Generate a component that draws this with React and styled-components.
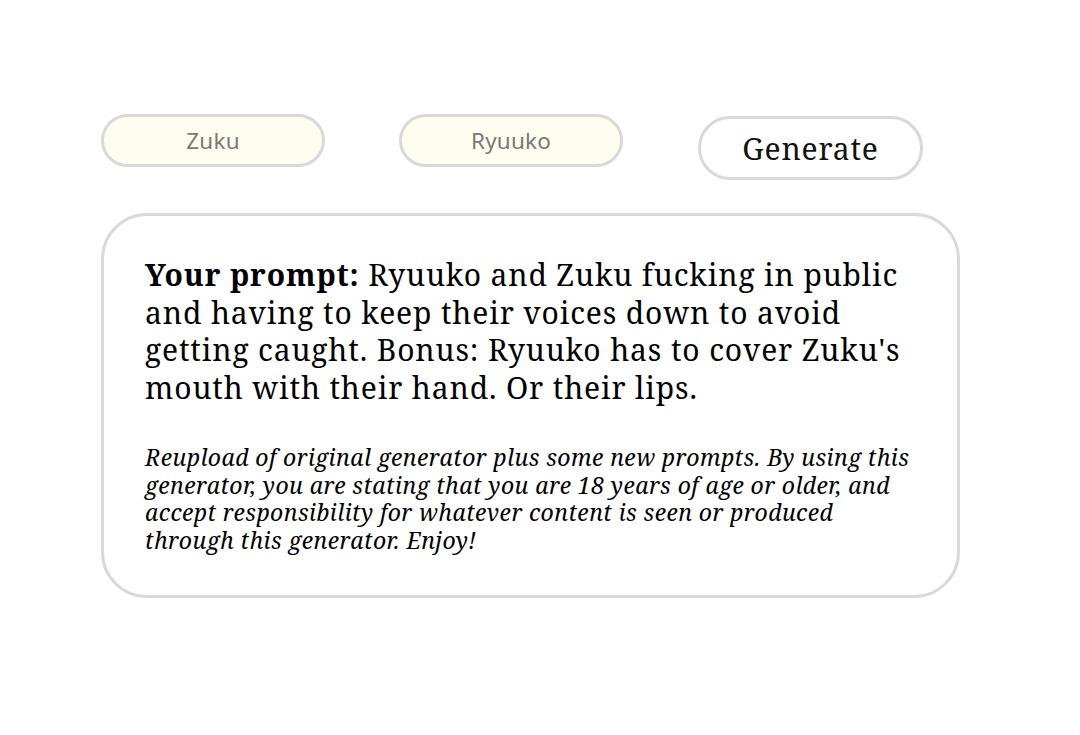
import React from "react";
import styled, { createGlobalStyle } from "styled-components";

const Global = createGlobalStyle`
  html, body { margin: 0; padding: 0; background: #fff; }
  body { font-family: "Noto Serif", serif; }
`;

const Page = styled.div`
  width: 1080px;
  height: 735px;
  box-sizing: border-box;
  padding: 114px 0 0 101px;
`;

const Controls = styled.div`
  display: flex;
  align-items: flex-start;
  gap: 74px;
  width: 822px;
`;

const NameInput = styled.input`
  box-sizing: border-box;
  width: 224px;
  height: 53px;
  border: 3px solid #d9d9d9;
  border-radius: 27px;
  background: #fefef0;
  text-align: center;
  font-family: "Noto Sans", sans-serif;
  font-size: 22.5px;
  letter-spacing: 0.2px;
  color: #7a7a72;
  outline: none;
  padding: 0 10px;
`;

const GenerateButton = styled.button`
  box-sizing: border-box;
  width: 225px;
  height: 64px;
  margin-top: 2px;
  margin-left: 1px;
  border: 3px solid #d9d9d9;
  border-radius: 32px;
  background: #fff;
  font-family: "Noto Serif", serif;
  font-size: 30px;
  letter-spacing: 0.8px;
  color: #111;
  cursor: pointer;
`;

const Card = styled.div`
  box-sizing: border-box;
  width: 859px;
  height: 385px;
  margin-top: 33px;
  border: 3px solid #d9d9d9;
  border-radius: 46px;
  padding: 40px 40px 0 41px;
`;

const Prompt = styled.p`
  margin: 0;
  font-family: "Noto Serif", serif;
  font-size: 30px;
  letter-spacing: 0.86px;
  line-height: 37.7px;
  color: #000;
`;

const Note = styled.p`
  margin: 37px 0 0;
  font-family: "Noto Serif", serif;
  font-style: italic;
  font-size: 23px;
  letter-spacing: 0.43px;
  line-height: 27.7px;
  color: #000;
`;

export default function App() {
  return (
    <>
      <Global />
      <Page>
        <Controls>
          <NameInput defaultValue="Zuku" />
          <NameInput defaultValue="Ryuuko" />
          <GenerateButton>Generate</GenerateButton>
        </Controls>
        <Card>
          <Prompt>
            <b>Your prompt:</b> Ryuuko and Zuku fucking in public and having to keep their voices down to avoid getting caught. Bonus: Ryuuko has to cover Zuku's mouth with their hand. Or their lips.
          </Prompt>
          <Note>
            Reupload of original generator plus some new prompts. By using this generator, you are stating that you are 18 years of age or older, and accept responsibility for whatever content is seen or produced through this generator. Enjoy!
          </Note>
        </Card>
      </Page>
    </>
  );
}
